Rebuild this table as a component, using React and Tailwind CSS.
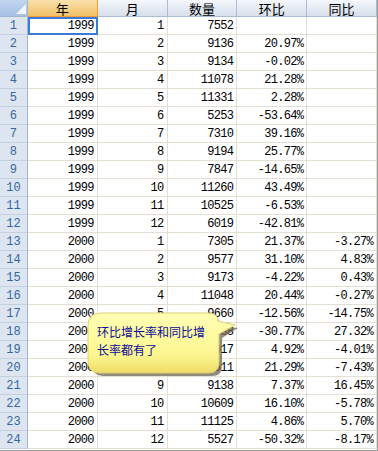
import React from "react";

const rows = [
  ["1999", "1", "7552", "", ""],
  ["1999", "2", "9136", "20.97%", ""],
  ["1999", "3", "9134", "-0.02%", ""],
  ["1999", "4", "11078", "21.28%", ""],
  ["1999", "5", "11331", "2.28%", ""],
  ["1999", "6", "5253", "-53.64%", ""],
  ["1999", "7", "7310", "39.16%", ""],
  ["1999", "8", "9194", "25.77%", ""],
  ["1999", "9", "7847", "-14.65%", ""],
  ["1999", "10", "11260", "43.49%", ""],
  ["1999", "11", "10525", "-6.53%", ""],
  ["1999", "12", "6019", "-42.81%", ""],
  ["2000", "1", "7305", "21.37%", "-3.27%"],
  ["2000", "2", "9577", "31.10%", "4.83%"],
  ["2000", "3", "9173", "-4.22%", "0.43%"],
  ["2000", "4", "11048", "20.44%", "-0.27%"],
  ["2000", "5", "9660", "-12.56%", "-14.75%"],
  ["2000", "6", "6688", "-30.77%", "27.32%"],
  ["2000", "7", "7017", "4.92%", "-4.01%"],
  ["2000", "8", "8511", "21.29%", "-7.43%"],
  ["2000", "9", "9138", "7.37%", "16.45%"],
  ["2000", "10", "10609", "16.10%", "-5.78%"],
  ["2000", "11", "11125", "4.86%", "5.70%"],
  ["2000", "12", "5527", "-50.32%", "-8.17%"],
];

const headers = ["年", "月", "数量", "环比", "同比"];
const mono = { fontFamily: '"Liberation Mono", "DejaVu Sans Mono", monospace' };
const cjk = { fontFamily: '"Noto Sans CJK SC", "Noto Sans", sans-serif' };

export default function App() {
  return (
    <div className="relative w-[378px] h-[451px] bg-white overflow-hidden border-r border-b border-[#9a9a9a]">
      {/* header row */}
      <div className="flex h-[17px]">
        <div className="relative w-[28px] h-[17px] bg-gradient-to-b from-[#c2d5ee] to-[#a7c1e4] border-r border-b border-[#9eb6ce]">
          <svg className="absolute left-0 top-0" width="28" height="17">
            <defs>
              <linearGradient id="tri" x1="0" y1="0" x2="1" y2="1">
                <stop offset="0" stopColor="#e6eef9" />
                <stop offset="1" stopColor="#f8fbff" />
              </linearGradient>
            </defs>
            <polygon points="16,14 26,14 26,4" fill="url(#tri)" />
          </svg>
        </div>
        {headers.map((h, i) => (
          <div
            key={h}
            className={
              i === 0
                ? "w-[70px] h-[17px] flex items-center justify-center text-[13px] leading-[15px] text-black bg-gradient-to-b from-[#fae0ac] to-[#f1c165] border-r border-l border-b border-[#f29a3a] -ml-px"
                : "w-[70px] h-[17px] flex items-center justify-center text-[13px] leading-[15px] text-black bg-gradient-to-b from-[#f5f8fc] to-[#d6dfeb] border-r border-b border-[#a9bcd3]"
            }
            style={i === 0 ? { ...cjk, width: 71 } : cjk}
          >
            {h}
          </div>
        ))}
      </div>
      {/* data rows */}
      {rows.map((r, ri) => (
        <div key={ri} className="flex h-[18px]">
          <div
            className="w-[28px] h-[18px] flex items-center justify-center text-[12px] text-[#3566a3] bg-[#dde5f0] border-r border-b border-r-[#9eb6ce] border-b-[#c3d1e3]"
            style={mono}
          >
            {ri + 1}
          </div>
          {r.map((c, ci) => (
            <div
              key={ci}
              className="w-[70px] h-[18px] flex items-center justify-end pr-[3px] text-[12px] tracking-[-0.7px] text-black border-r border-b border-[#e3e0d3]"
              style={mono}
            >
              {c}
            </div>
          ))}
        </div>
      ))}
      {/* selected cell */}
      <div className="absolute left-[28px] top-[17px] w-[70px] h-[18px] border-2 border-[#3a7bd5]" />
      {/* callout */}
      <div className="absolute left-[84px] top-[306px] w-[160px] h-[76px]">
        <svg width="160" height="76" className="absolute left-0 top-0">
          <defs>
            <linearGradient id="bub" x1="0" y1="0" x2="0" y2="1">
              <stop offset="0" stopColor="#ffffb4" />
              <stop offset="0.7" stopColor="#fdf690" />
              <stop offset="1" stopColor="#eedd66" />
            </linearGradient>
          </defs>
          <path
            d="M18 8 H124 Q134 8 134 18 L152 20 L136 30 V58 Q136 68 126 68 H18 Q6 68 6 56 V20 Q6 8 18 8 Z"
            transform="translate(2 2)"
            fill="#6d6650"
            opacity="0.75"
          />
          <path
            d="M18 7 H124 Q134 7 134 15 L151 19 L135 28 V56 Q135 67 124 67 H16 Q4 67 4 55 V19 Q4 7 18 7 Z"
            fill="url(#bub)"
            stroke="#e0d070"
            strokeWidth="1"
          />
        </svg>
        <div
          className="absolute left-[13px] top-[17px] w-[122px] text-[12px] leading-[18px] text-[#0a0a9c]"
          style={cjk}
        >
          环比增长率和同比增
          <br />
          长率都有了
        </div>
      </div>
    </div>
  );
}
